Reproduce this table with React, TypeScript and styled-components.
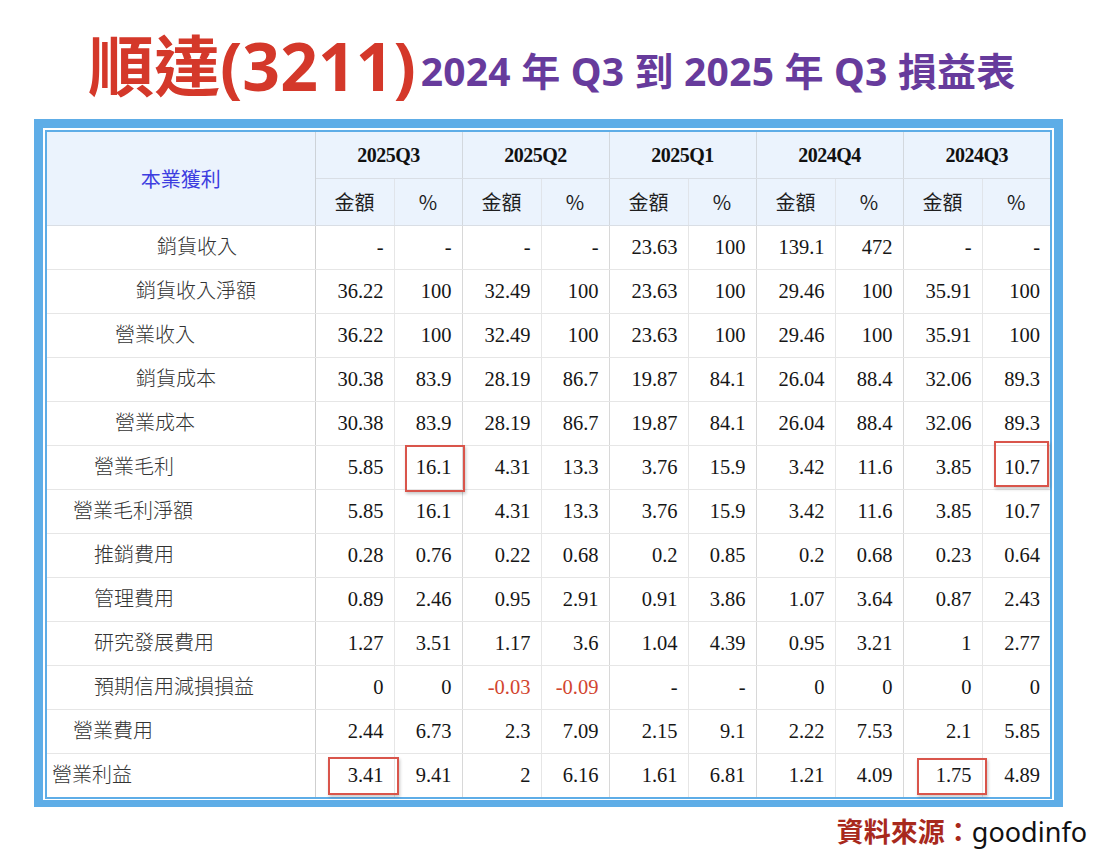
import React from 'react';
import styled, { createGlobalStyle } from 'styled-components';

type MarkBox = { t: number; r: number; b: number; l: number };

interface Row {
  label: string;
  level: number;
  values: string[];
}

const periods = ['2025Q3', '2025Q2', '2025Q1', '2024Q4', '2024Q3'];

const revenue = ['36.22', '100', '32.49', '100', '23.63', '100', '29.46', '100', '35.91', '100'];
const cost = ['30.38', '83.9', '28.19', '86.7', '19.87', '84.1', '26.04', '88.4', '32.06', '89.3'];
const gross = ['5.85', '16.1', '4.31', '13.3', '3.76', '15.9', '3.42', '11.6', '3.85', '10.7'];

const rows: Row[] = [
  { label: '銷貨收入', level: 5, values: ['-', '-', '-', '-', '23.63', '100', '139.1', '472', '-', '-'] },
  { label: '銷貨收入淨額', level: 4, values: revenue },
  { label: '營業收入', level: 3, values: revenue },
  { label: '銷貨成本', level: 4, values: cost },
  { label: '營業成本', level: 3, values: cost },
  { label: '營業毛利', level: 2, values: gross },
  { label: '營業毛利淨額', level: 1, values: gross },
  { label: '推銷費用', level: 2, values: ['0.28', '0.76', '0.22', '0.68', '0.2', '0.85', '0.2', '0.68', '0.23', '0.64'] },
  { label: '管理費用', level: 2, values: ['0.89', '2.46', '0.95', '2.91', '0.91', '3.86', '1.07', '3.64', '0.87', '2.43'] },
  { label: '研究發展費用', level: 2, values: ['1.27', '3.51', '1.17', '3.6', '1.04', '4.39', '0.95', '3.21', '1', '2.77'] },
  { label: '預期信用減損損益', level: 2, values: ['0', '0', '-0.03', '-0.09', '-', '-', '0', '0', '0', '0'] },
  { label: '營業費用', level: 1, values: ['2.44', '6.73', '2.3', '7.09', '2.15', '9.1', '2.22', '7.53', '2.1', '5.85'] },
  { label: '營業利益', level: 0, values: ['3.41', '9.41', '2', '6.16', '1.61', '6.81', '1.21', '4.09', '1.75', '4.89'] }
];

// red annotation boxes drawn over some cells: "row-col" -> insets
const marks: Record<string, MarkBox> = {
  '5-1': { t: -1, r: -3, b: -3, l: 10 },
  '5-9': { t: -5, r: 1, b: 2, l: 11 },
  '12-0': { t: 3, r: -5, b: 2, l: 12 },
  '12-8': { t: 4, r: -5, b: 2, l: 13 }
};

const App: React.FC = () => {
  return (
    <Page>
      <GlobalStyle />
      <Heading>
        <Company>順達(3211)</Company>
        <Subtitle>2024 年 Q3 到 2025 年 Q3 損益表</Subtitle>
      </Heading>

      <Frame>
        <TableBox>
          <Table>
            <colgroup>
              <col style={{ width: 268 }} />
              {periods.map((p) => (
                <React.Fragment key={p}>
                  <col style={{ width: 79 }} />
                  <col style={{ width: 68 }} />
                </React.Fragment>
              ))}
            </colgroup>
            <thead>
              <tr>
                <CornerCell rowSpan={2}>本業獲利</CornerCell>
                {periods.map((p, i) => (
                  <PeriodCell key={p} colSpan={2} $last={i === periods.length - 1}>
                    {p}
                  </PeriodCell>
                ))}
              </tr>
              <tr>
                {periods.map((p, i) => (
                  <React.Fragment key={p}>
                    <SubCell>金額</SubCell>
                    <SubCell $groupEnd $last={i === periods.length - 1}>%</SubCell>
                  </React.Fragment>
                ))}
              </tr>
            </thead>
            <tbody>
              {rows.map((row, r) => (
                <tr key={row.label}>
                  <LabelCell $level={row.level} $lastRow={r === rows.length - 1}>
                    {row.label}
                  </LabelCell>
                  {row.values.map((v, c) => {
                    const mark = marks[`${r}-${c}`];
                    return (
                      <NumCell
                        key={c}
                        $neg={v.startsWith('-') && v.length > 1}
                        $groupEnd={c % 2 === 1}
                        $last={c === row.values.length - 1}
                        $lastRow={r === rows.length - 1}
                      >
                        {v}
                        {mark && <Mark $t={mark.t} $r={mark.r} $b={mark.b} $l={mark.l} />}
                      </NumCell>
                    );
                  })}
                </tr>
              ))}
            </tbody>
          </Table>
        </TableBox>
      </Frame>

      <Source>
        <SourceLabel>資料來源：</SourceLabel>
        <SourceName>goodinfo</SourceName>
      </Source>
    </Page>
  );
};

const GlobalStyle = createGlobalStyle`
  html, body {
    margin: 0;
    padding: 0;
    background: #ffffff;
  }
  body {
    font-family: "Noto Sans", "Noto Sans CJK TC", sans-serif;
  }
`;

const Page = styled.div`
  width: 1115px;
  height: 857px;
  box-sizing: border-box;
  padding: 0 0 0 34px;
  overflow: hidden;
`;

const Heading = styled.h1`
  margin: 0;
  padding: 20px 0 0 54px;
  height: 119px;
  box-sizing: border-box;
  line-height: 90px;
  white-space: nowrap;
`;

const Company = styled.span`
  font-family: "Noto Sans", "Noto Sans CJK TC", sans-serif;
  font-size: 66px;
  font-weight: 700;
  color: #d4382a;
`;

const Subtitle = styled.span`
  display: inline-block;
  margin-left: 5px;
  vertical-align: 5px;
  font-family: "Noto Sans", "Noto Sans CJK TC", sans-serif;
  font-size: 39px;
  font-weight: 700;
  letter-spacing: 0.2px;
  color: #673b9c;
`;

const Frame = styled.div`
  width: 1029px;
  box-sizing: border-box;
  border: 9px solid #5eade7;
  border-bottom-width: 7px;
  padding: 2px 2px 1px 2px;
  background: #ffffff;
`;

const TableBox = styled.div`
  border: 2px solid #5eade7;
`;

const Table = styled.table`
  width: 100%;
  table-layout: fixed;
  border-collapse: collapse;
  border-spacing: 0;
`;

const HeadBase = styled.th`
  height: 46px;
  padding: 0;
  background: #ebf3fd;
  border-bottom: 1px solid #d9dee5;
  text-align: center;
  vertical-align: middle;
  line-height: 1;
`;

const CornerCell = styled(HeadBase)`
  border-right: 1px solid #cdd2d8;
  font-family: "Noto Sans CJK TC", sans-serif;
  font-size: 20px;
  font-weight: 400;
  color: #3d3de0;
`;

const PeriodCell = styled(HeadBase)<{ $last?: boolean }>`
  border-right: ${(p) => (p.$last ? 'none' : '1px solid #d3d8de')};
  font-family: "Liberation Serif", "Times New Roman", serif;
  font-size: 20px;
  font-weight: 700;
  letter-spacing: -0.5px;
  color: #111111;
`;

const SubCell = styled(HeadBase)<{ $groupEnd?: boolean; $last?: boolean }>`
  border-right: ${(p) =>
    p.$last ? 'none' : p.$groupEnd ? '1px solid #d3d8de' : '1px solid #e0e4ea'};
  font-family: "Noto Sans CJK TC", sans-serif;
  font-size: 20px;
  font-weight: 400;
  color: #1e1e1e;
`;

const LabelCell = styled.td<{ $level: number; $lastRow?: boolean }>`
  height: 40px;
  padding: 0 0 3px ${(p) => 5 + p.$level * 21}px;
  border-right: 1px solid #cfcfcf;
  border-bottom: ${(p) => (p.$lastRow ? 'none' : '1px solid #e6e6e6')};
  font-family: "Noto Sans CJK TC", sans-serif;
  font-size: 20px;
  font-weight: 300;
  line-height: 1;
  color: #333333;
  white-space: nowrap;
`;

const NumCell = styled.td<{ $neg?: boolean; $groupEnd?: boolean; $last?: boolean; $lastRow?: boolean }>`
  position: relative;
  height: 43px;
  padding: 0 10px 0 0;
  text-align: right;
  font-family: "Liberation Serif", "Times New Roman", serif;
  font-size: 20.5px;
  line-height: 1;
  color: ${(p) => (p.$neg ? '#d2452f' : '#161616')};
  border-bottom: ${(p) => (p.$lastRow ? 'none' : '1px solid #e6e6e6')};
  border-right: ${(p) =>
    p.$last ? 'none' : p.$groupEnd ? '1px solid #d8d8d8' : '1px solid #e6e6e6'};
`;

const Mark = styled.span<{ $t: number; $r: number; $b: number; $l: number }>`
  position: absolute;
  top: ${(p) => p.$t}px;
  right: ${(p) => p.$r}px;
  bottom: ${(p) => p.$b}px;
  left: ${(p) => p.$l}px;
  border: 2px solid #d9554b;
  box-shadow: 1px 2px 3px rgba(0, 0, 0, 0.22);
  pointer-events: none;
`;

const Source = styled.div`
  display: flex;
  justify-content: flex-end;
  align-items: baseline;
  padding: 4px 28px 0 0;
  font-size: 27px;
  line-height: 40px;
`;

const SourceLabel = styled.span`
  font-family: "Noto Sans CJK TC", sans-serif;
  font-weight: 700;
  color: #a8291c;
`;

const SourceName = styled.span`
  font-family: "Noto Sans", "Open Sans", sans-serif;
  font-weight: 400;
  color: #111111;
`;

export default App;
